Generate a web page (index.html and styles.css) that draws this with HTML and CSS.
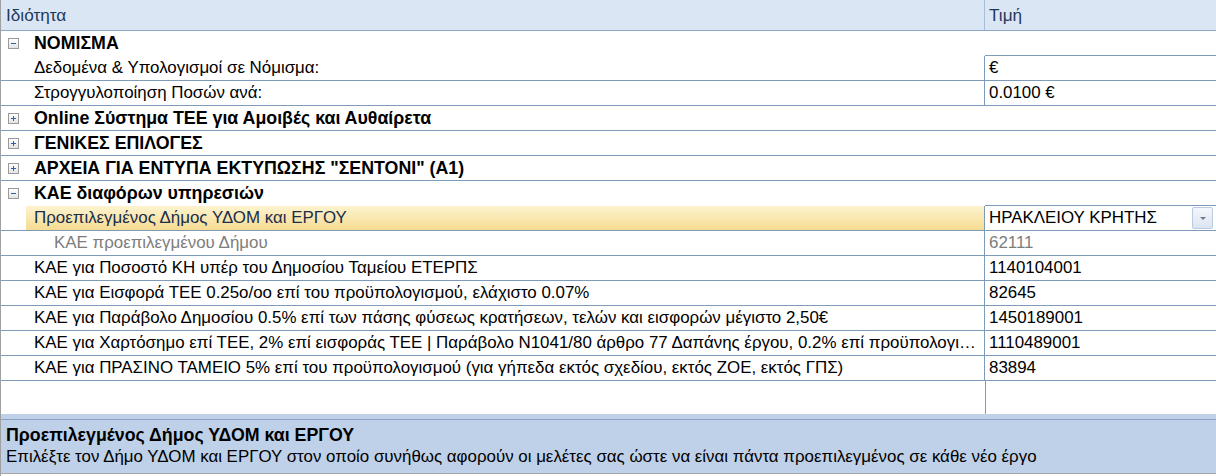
FILE: index.html
```html
<!DOCTYPE html>
<html lang="el">
<head>
<meta charset="utf-8">
<title>Ιδιότητες</title>
<link rel="stylesheet" href="styles.css">
</head>
<body>
<div class="grid">
  <div class="header">
    <div class="hcell hname">Ιδιότητα</div>
    <div class="hcell hvalue">Τιμή</div>
  </div>

  <div class="row cat open">
    <div class="indent"><span class="exp minus"></span></div>
    <div class="cattext">ΝΟΜΙΣΜΑ</div>
    <div class="catline"></div>
  </div>
  <div class="row prop">
    <div class="indent"></div>
    <div class="name">Δεδομένα &amp; Υπολογισμοί σε Νόμισμα:</div>
    <div class="value">€</div>
  </div>
  <div class="row prop">
    <div class="indent"></div>
    <div class="name">Στρογγυλοποίηση Ποσών ανά:</div>
    <div class="value">0.0100 €</div>
  </div>
  <div class="row cat">
    <div class="indent"><span class="exp plus"></span></div>
    <div class="cattext">Online Σύστημα ΤΕΕ για Αμοιβές και Αυθαίρετα</div>
  </div>
  <div class="row cat">
    <div class="indent"><span class="exp plus"></span></div>
    <div class="cattext">ΓΕΝΙΚΕΣ ΕΠΙΛΟΓΕΣ</div>
  </div>
  <div class="row cat">
    <div class="indent"><span class="exp plus"></span></div>
    <div class="cattext">ΑΡΧΕΙΑ ΓΙΑ ΕΝΤΥΠΑ ΕΚΤΥΠΩΣΗΣ "ΣΕΝΤΟΝΙ" (Α1)</div>
  </div>
  <div class="row cat open">
    <div class="indent"><span class="exp minus"></span></div>
    <div class="cattext">ΚΑΕ διαφόρων υπηρεσιών</div>
    <div class="catline"></div>
  </div>
  <div class="row prop selected">
    <div class="indent"></div>
    <div class="name">Προεπιλεγμένος Δήμος ΥΔΟΜ και ΕΡΓΟΥ</div>
    <div class="value editor"><span class="etext">ΗΡΑΚΛΕΙΟΥ ΚΡΗΤΗΣ</span><span class="dropbtn"><span class="arrow"></span></span></div>
  </div>
  <div class="row prop readonly">
    <div class="indent"></div>
    <div class="name sub">ΚΑΕ προεπιλεγμένου Δήμου</div>
    <div class="value">62111</div>
  </div>
  <div class="row prop">
    <div class="indent"></div>
    <div class="name">ΚΑΕ για Ποσοστό ΚΗ υπέρ του Δημοσίου Ταμείου ΕΤΕΡΠΣ</div>
    <div class="value">1140104001</div>
  </div>
  <div class="row prop">
    <div class="indent"></div>
    <div class="name">ΚΑΕ για Εισφορά ΤΕΕ 0.25ο/οο επί του προϋπολογισμού, ελάχιστο 0.07%</div>
    <div class="value">82645</div>
  </div>
  <div class="row prop">
    <div class="indent"></div>
    <div class="name">ΚΑΕ για Παράβολο Δημοσίου 0.5% επί των πάσης φύσεως κρατήσεων, τελών και εισφορών μέγιστο 2,50€</div>
    <div class="value">1450189001</div>
  </div>
  <div class="row prop">
    <div class="indent"></div>
    <div class="name">ΚΑΕ για Χαρτόσημο επί ΤΕΕ, 2% επί εισφοράς ΤΕΕ | Παράβολο Ν1041/80 άρθρο 77 Δαπάνης έργου, 0.2% επί προϋπολογισμού</div>
    <div class="value">1110489001</div>
  </div>
  <div class="row prop">
    <div class="indent"></div>
    <div class="name">ΚΑΕ για ΠΡΑΣΙΝΟ ΤΑΜΕΙΟ 5% επί του προϋπολογισμού (για γήπεδα εκτός σχεδίου, εκτός ΖΟΕ, εκτός ΓΠΣ)</div>
    <div class="value">83894</div>
  </div>
  <div class="filler">
    <div class="fname"></div>
    <div class="fvalue"></div>
  </div>

  <div class="desc">
    <div class="dtitle">Προεπιλεγμένος Δήμος ΥΔΟΜ και ΕΡΓΟΥ</div>
    <div class="dtext">Επιλέξτε τον Δήμο ΥΔΟΜ και ΕΡΓΟΥ στον οποίο συνήθως αφορούν οι μελέτες σας ώστε να είναι πάντα προεπιλεγμένος σε κάθε νέο έργο</div>
  </div>
</div>
</body>
</html>
```

FILE: styles.css
```css
html, body {
  margin: 0;
  padding: 0;
  background: #ffffff;
}

body {
  font-family: "Liberation Sans", Arial, sans-serif;
  font-size: 16.9px;
  color: #000000;
  width: 1216px;
  height: 476px;
  overflow: hidden;
}

.grid {
  display: flex;
  flex-direction: column;
  height: 476px;
  border-left: 1px solid #a0a0a0;
  box-sizing: border-box;
}

.header {
  display: flex;
  height: 30px;
  background: #dbe6f4;
  border-bottom: 1px solid #8ea7c6;
  color: #1e395b;
  font-size: 17.2px;
}

.hcell {
  display: flex;
  align-items: center;
  box-sizing: border-box;
}

.hname {
  width: 984px;
  padding-left: 5px;
  border-right: 1px solid #a9bdd6;
}

.hvalue {
  flex: 1;
  padding-left: 4px;
}

.row {
  display: flex;
  height: 24px;
  border-bottom: 1px solid #7f9bba;
  line-height: 24px;
}

.row.open {
  height: 25px;
  border-bottom: none;
}

.catline {
  margin-left: auto;
  align-self: flex-end;
  width: 231px;
  height: 1px;
  background: #7f9bba;
}

.indent {
  width: 25px;
  flex: none;
  display: flex;
  align-items: center;
  padding-left: 7px;
  box-sizing: border-box;
}

.open .indent {
  height: 24px;
}

.exp {
  width: 9px;
  height: 9px;
  border: 1px solid #9a9a9a;
  background: linear-gradient(#ffffff, #e4e4e4);
  position: relative;
  flex: none;
}

.exp::before {
  content: "";
  position: absolute;
  left: 2px;
  top: 4px;
  width: 5px;
  height: 1px;
  background: #2d5ea8;
}

.exp.plus::after {
  content: "";
  position: absolute;
  left: 4px;
  top: 2px;
  width: 1px;
  height: 5px;
  background: #2d5ea8;
}

.cattext {
  font-weight: bold;
  font-size: 17.8px;
  padding-left: 8px;
  white-space: nowrap;
}

.name {
  width: 959px;
  flex: none;
  box-sizing: border-box;
  padding-left: 8px;
  padding-right: 4px;
  border-right: 1px solid #7f9bba;
  white-space: nowrap;
  overflow: hidden;
  text-overflow: ellipsis;
}

.name.sub {
  padding-left: 28px;
}

.value {
  flex: 1;
  padding-left: 4px;
  white-space: nowrap;
  overflow: hidden;
}

.readonly .name,
.readonly .value {
  color: #7d7d7d;
}

.selected .name {
  background: linear-gradient(#fdf3cf, #f6dc92);
  color: #1a2d4a;
}

.editor {
  display: flex;
  align-items: center;
  justify-content: space-between;
  padding-right: 3px;
}

.dropbtn {
  width: 21px;
  height: 22px;
  box-sizing: border-box;
  border: 1px solid #bccbe0;
  border-radius: 2px;
  background: linear-gradient(#f4f7fb, #dbe5f2);
  display: flex;
  align-items: center;
  justify-content: center;
}

.arrow {
  width: 0;
  height: 0;
  border-left: 3px solid transparent;
  border-right: 3px solid transparent;
  border-top: 3px solid #6f7c8c;
}

.filler {
  display: flex;
  height: 33px;
  flex: none;
}

.fname {
  width: 984px;
  border-right: 1px solid #7f9bba;
}

.fvalue {
  flex: 1;
}

.desc {
  flex: 1;
  background: #bfd1e8;
  border-bottom: 1px solid #a5a5a5;
  margin-bottom: 2px;
  padding-top: 5px;
  box-sizing: border-box;
  display: flex;
  flex-direction: column;
}

.desc::before {
  content: "";
  display: block;
  border-top: 1px solid #8aa3c3;
  margin-bottom: 4px;
}

.dtitle {
  font-weight: bold;
  font-size: 17.8px;
  padding-left: 5px;
  line-height: 22px;
}

.dtext {
  padding-left: 5px;
  line-height: 22px;
}
```
